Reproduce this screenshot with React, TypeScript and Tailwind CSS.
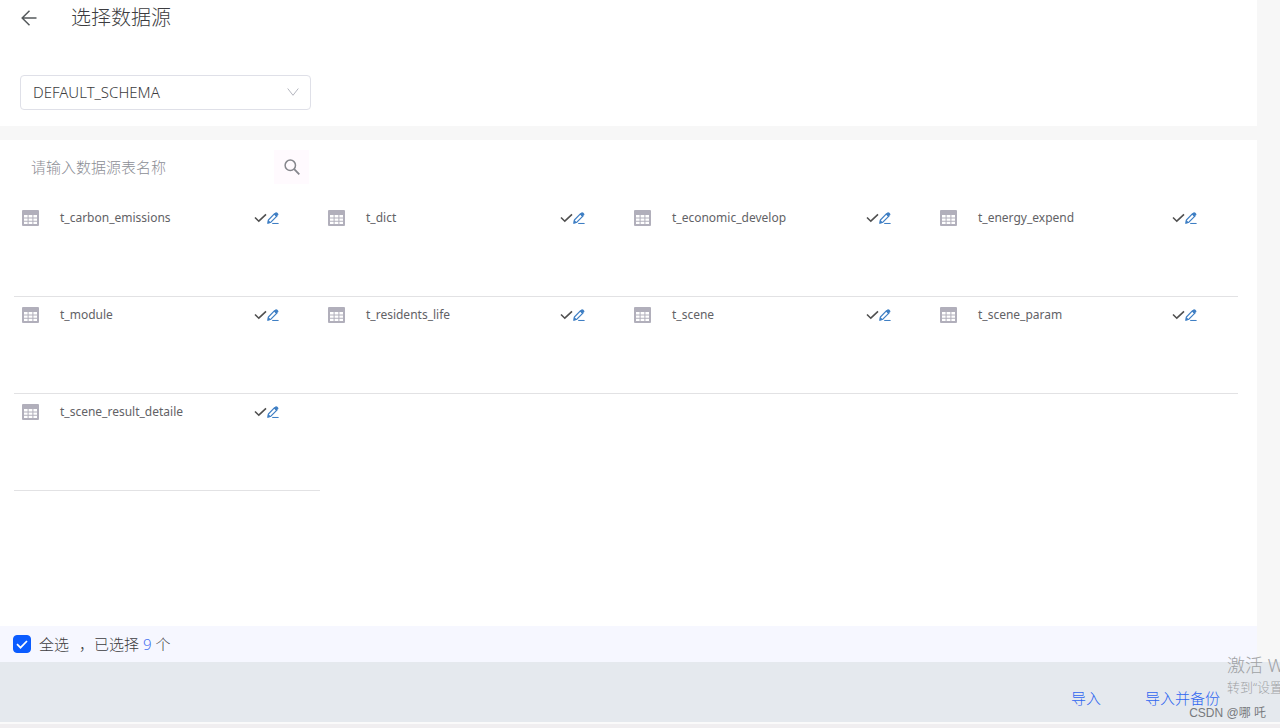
import { useState } from 'react';

const TABLES = [
    't_carbon_emissions',
    't_dict',
    't_economic_develop',
    't_energy_expend',
    't_module',
    't_residents_life',
    't_scene',
    't_scene_param',
    't_scene_result_detaile',
];

function BackIcon() {
    return (
        <svg width="16" height="16" viewBox="0 0 16 16" fill="none" stroke="#555a5c" strokeWidth="1.5">
            <path d="M15.5 8H1M8.5 0.8L1.2 8l7.3 7.2" />
        </svg>
    );
}

function TableIcon() {
    return (
        <svg width="17" height="16" viewBox="0 0 17 16" className="shrink-0">
            <rect width="17" height="16" rx="1" fill="#b1afbb" />
            <g fill="#fff">
                <path d="M2 5h3.6v2.4H2zM6.6 5h3.8v2.4H6.6zM11.4 5H15v2.4h-3.6z" />
                <path d="M2 8.4h3.6v2.4H2zM6.6 8.4h3.8v2.4H6.6zM11.4 8.4H15v2.4h-3.6z" />
                <path d="M2 11.8h3.6v2.2H2zM6.6 11.8h3.8v2.2H6.6zM11.4 11.8H15v2.2h-3.6z" />
            </g>
        </svg>
    );
}

function CheckIcon() {
    return (
        <svg width="13" height="12" viewBox="0 0 13 12" fill="none" stroke="#505050" strokeWidth="1.6">
            <path d="M1 5.5L4.8 9.2L12 2.4" />
        </svg>
    );
}

function EditIcon() {
    return (
        <svg width="12" height="12" viewBox="0 0 12 12" fill="none" stroke="#3f7fc4" strokeWidth="1.1">
            <path d="M1.4 8L7.4 1.8L9.8 4.2L3.8 10.2L1 11Z" />
            <path d="M6.8 2.2L8.4 0.5Q9.4 -0.2 10.4 0.7L11 1.4Q11.8 2.4 11 3.3L9.4 5Z" fill="#3f7fc4" stroke="none" />
            <path d="M0.3 11.8L1 7.8L4.2 10.8Z" fill="#3f7fc4" stroke="none" />
            <path d="M5.2 11.5H11.6" />
        </svg>
    );
}

function TableItem({ name }: { name: string }) {
    return (
        <li className="flex h-[97px] items-start border-b border-[#e2e2e4] pt-2 pr-[41px] pl-2">
            <div className="flex h-5 w-full items-center">
                <TableIcon />
                <span className="ml-[21px] flex-1 text-xs text-[#626266]">{name}</span>
                <CheckIcon />
                <button type="button" aria-label={name} className="cursor-pointer">
                    <EditIcon />
                </button>
            </div>
        </li>
    );
}

export default function App() {
    const [schema, setSchema] = useState('DEFAULT_SCHEMA');
    const [keyword, setKeyword] = useState('');
    const [allSelected, setAllSelected] = useState(true);

    const visible = TABLES.filter((name) => name.includes(keyword));

    return (
        <div className="relative flex min-h-screen flex-col overflow-hidden bg-[#f7f7f7] font-['Noto_Sans','Noto_Sans_CJK_SC',sans-serif] text-[#3c3c40]">
            <div className="mr-[23px] flex flex-1 flex-col">
                <header className="h-[126px] bg-white px-5">
                    <div className="flex h-[35px] items-center gap-[34px]">
                        <button type="button" aria-label="返回" className="cursor-pointer pl-px">
                            <BackIcon />
                        </button>
                        <h1 className="text-xl font-light">选择数据源</h1>
                    </div>
                    <div className="relative mt-10 w-[291px]">
                        <select
                            aria-label="Schema"
                            value={schema}
                            onChange={(e) => setSchema(e.target.value)}
                            className="h-[35px] w-full appearance-none rounded border border-[#dfe0e8] bg-white px-3 text-[15px] font-light outline-none"
                        >
                            <option>DEFAULT_SCHEMA</option>
                        </select>
                        <svg className="pointer-events-none absolute top-3 right-3" width="12" height="10" viewBox="0 0 12 10" fill="none" stroke="#b4b6bf">
                            <path d="M0.7 1.5L6 8.3L11.3 1.5" />
                        </svg>
                    </div>
                </header>

                <main className="mt-[14px] flex-1 bg-white">
                    <div className="flex w-[309px] items-center pt-[10px] pl-5">
                        <input
                            type="text"
                            aria-label="请输入数据源表名称"
                            placeholder="请输入数据源表名称"
                            value={keyword}
                            onChange={(e) => setKeyword(e.target.value)}
                            className="h-[34px] min-w-0 flex-1 px-[11px] text-[15px] font-light outline-none placeholder:text-[#8c8e95]"
                        />
                        <button type="button" aria-label="搜索" className="flex h-[34px] w-[35px] cursor-pointer items-center justify-center bg-[#fffafe]">
                            <svg width="16" height="16" viewBox="0 0 16 16" fill="none" stroke="#85868c" strokeWidth="1.5">
                                <circle cx="6.3" cy="6.3" r="5.2" />
                                <path d="M10.2 10.2L15.3 15.3" strokeWidth="1.8" />
                            </svg>
                        </button>
                    </div>
                    <ul className="mt-4 mr-[19px] ml-[14px] grid grid-cols-4">
                        {visible.map((name) => (
                            <TableItem key={name} name={name} />
                        ))}
                    </ul>
                </main>

                <div className="flex h-9 items-center bg-[#f6f7ff] pl-[13px] text-[15px] font-light">
                    <label className="flex items-center">
                        <span className="relative mr-2 flex">
                            <input
                                type="checkbox"
                                checked={allSelected}
                                onChange={(e) => setAllSelected(e.target.checked)}
                                className="size-[18px] appearance-none rounded border border-[#0b5cff] bg-white checked:bg-[#0b5cff]"
                            />
                            {allSelected && (
                                <svg className="pointer-events-none absolute inset-0" width="18" height="18" viewBox="0 0 18 18" fill="none" stroke="#fff" strokeWidth="1.7">
                                    <path d="M4 9.2L7.5 12.7L14 6" />
                                </svg>
                            )}
                        </span>
                        全选
                    </label>
                    <p className="ml-[10px]">
                        ，已选择 <span className="text-[#3f6ff0]">{allSelected ? TABLES.length : 0}</span> 个
                    </p>
                </div>
            </div>

            <footer className="flex h-[60px] items-center justify-end gap-11 bg-[#e5e9ee] pt-3 pr-[60px] text-[15px] font-light text-[#2f66f0]">
                <button type="button" className="cursor-pointer">导入</button>
                <button type="button" className="cursor-pointer">导入并备份</button>
            </footer>
            <div className="h-[6px] border-t-2 border-[#fafafa] bg-[#f0eef0]" />

            {/* watermarks */}
            <div className="pointer-events-none absolute right-0 bottom-[31px] w-[53px] overflow-hidden font-light whitespace-nowrap text-[#a0a2a5]">
                <p className="text-lg leading-6">激活 W</p>
                <p className="text-[13px] leading-5">转到“设置</p>
            </div>
            <p className="pointer-events-none absolute right-[14px] bottom-[7px] font-['Liberation_Sans','Noto_Sans_CJK_SC',sans-serif] text-xs leading-4 text-[#77797d]">
                CSDN @哪 吒
            </p>
        </div>
    );
}
